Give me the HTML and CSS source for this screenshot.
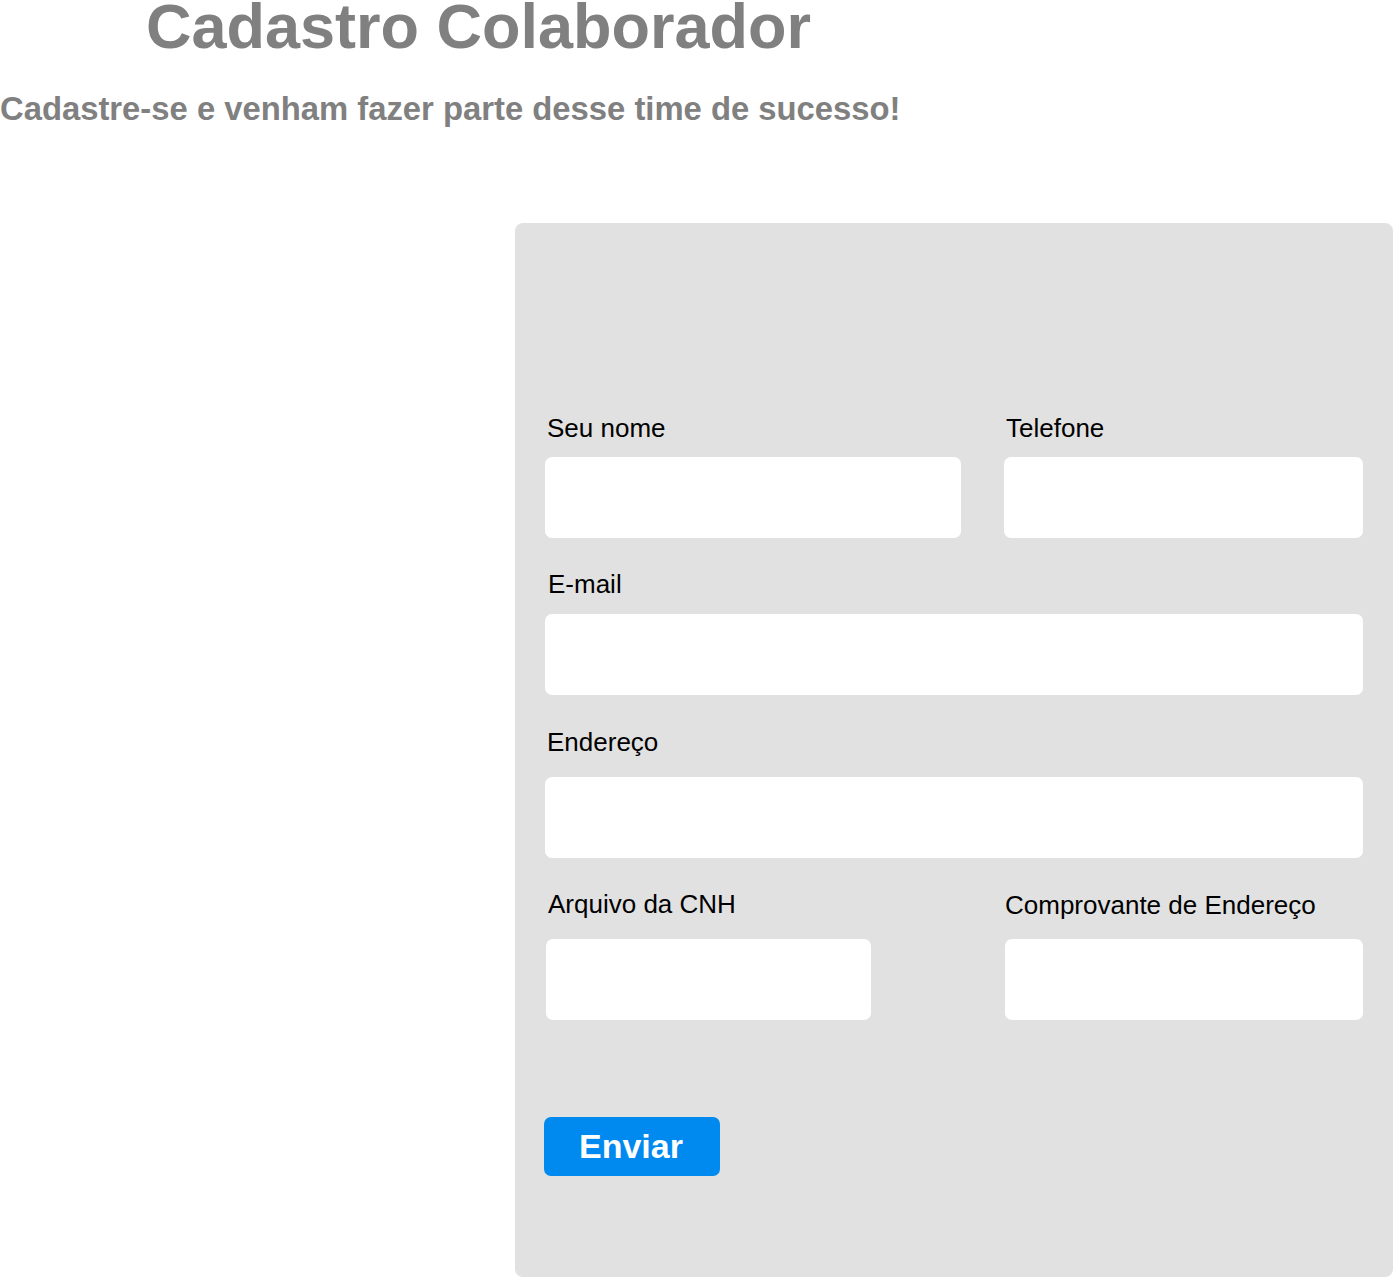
FILE: index.html
```html
<!DOCTYPE html>
<html lang="pt-BR">
<head>
<meta charset="utf-8">
<title>Cadastro Colaborador</title>
<link rel="stylesheet" href="styles.css">
</head>
<body>
<header class="head">
  <h1 class="title">Cadastro Colaborador</h1>
  <h2 class="subtitle">Cadastre-se e venham fazer parte desse time de sucesso!</h2>
</header>
<form class="panel">
  <div class="row row-1">
    <div class="field f-nome">
      <label class="lbl lbl-1">Seu nome</label>
      <input class="inp" type="text">
    </div>
    <div class="field f-tel">
      <label class="lbl lbl-1">Telefone</label>
      <input class="inp" type="text">
    </div>
  </div>
  <div class="row row-2">
    <div class="field f-full">
      <label class="lbl lbl-2">E-mail</label>
      <input class="inp" type="text">
    </div>
  </div>
  <div class="row row-3">
    <div class="field f-full">
      <label class="lbl lbl-3">Endereço</label>
      <input class="inp" type="text">
    </div>
  </div>
  <div class="row row-4">
    <div class="field f-cnh">
      <label class="lbl lbl-4">Arquivo da CNH</label>
      <input class="inp" type="text">
    </div>
    <div class="field f-comp">
      <label class="lbl lbl-4b">Comprovante de Endereço</label>
      <input class="inp" type="text">
    </div>
  </div>
  <button class="btn" type="button">Enviar</button>
</form>
</body>
</html>
```
FILE: styles.css
```css
html, body {
  margin: 0;
  padding: 0;
  background: #ffffff;
  font-family: "Liberation Sans", Arial, sans-serif;
}

.head {
  display: block;
}

.title {
  margin: -10px 0 0 146px;
  font-size: 63px;
  line-height: 72px;
  font-weight: bold;
  color: #808080;
}

.subtitle {
  margin: 28px 0 0 0;
  font-size: 32.8px;
  line-height: 38px;
  font-weight: bold;
  color: #808080;
}

.panel {
  box-sizing: border-box;
  margin: 95px 0 0 515px;
  width: 878px;
  height: 1054px;
  padding: 0 30px;
  background: #e1e1e1;
  border-radius: 8px;
  display: flex;
  flex-direction: column;
  overflow: hidden;
}

.row {
  display: flex;
  justify-content: space-between;
}

.row-1 { margin-top: 189.7px; }
.row-2 { margin-top: 31.3px; }
.row-3 { margin-top: 31.7px; }
.row-4 { margin-top: 30.7px; }

.field {
  display: flex;
  flex-direction: column;
}

.f-nome { width: 416px; }
.f-tel { width: 359px; }
.f-full { width: 100%; }
.f-cnh { width: 325px; margin-left: 1px; }
.f-comp { width: 358px; }

.lbl {
  display: block;
  font-size: 26px;
  line-height: 30px;
  color: #000000;
  padding-left: 2px;
}

.lbl-1 { margin-bottom: 14.3px; }
.lbl-2 { margin-bottom: 14.7px; padding-left: 3px; }
.lbl-3 { margin-bottom: 20.6px; }
.lbl-4 { margin-bottom: 20.3px; }
.lbl-4b { margin-top: 0.8px; margin-bottom: 19.5px; padding-left: 0; }

.inp {
  display: block;
  box-sizing: border-box;
  width: 100%;
  height: 81px;
  margin: 0;
  border: 0;
  border-radius: 7px;
  background: #ffffff;
  outline: none;
}

.btn {
  align-self: flex-start;
  margin: 96.7px 0 0 -1px;
  width: 176px;
  height: 59px;
  padding: 0 2px 0 0;
  border: 0;
  border-radius: 7px;
  background: #0089ef;
  color: #ffffff;
  font-family: "Liberation Sans", Arial, sans-serif;
  font-size: 34px;
  line-height: 59px;
  font-weight: bold;
  text-align: center;
  cursor: pointer;
}
```
